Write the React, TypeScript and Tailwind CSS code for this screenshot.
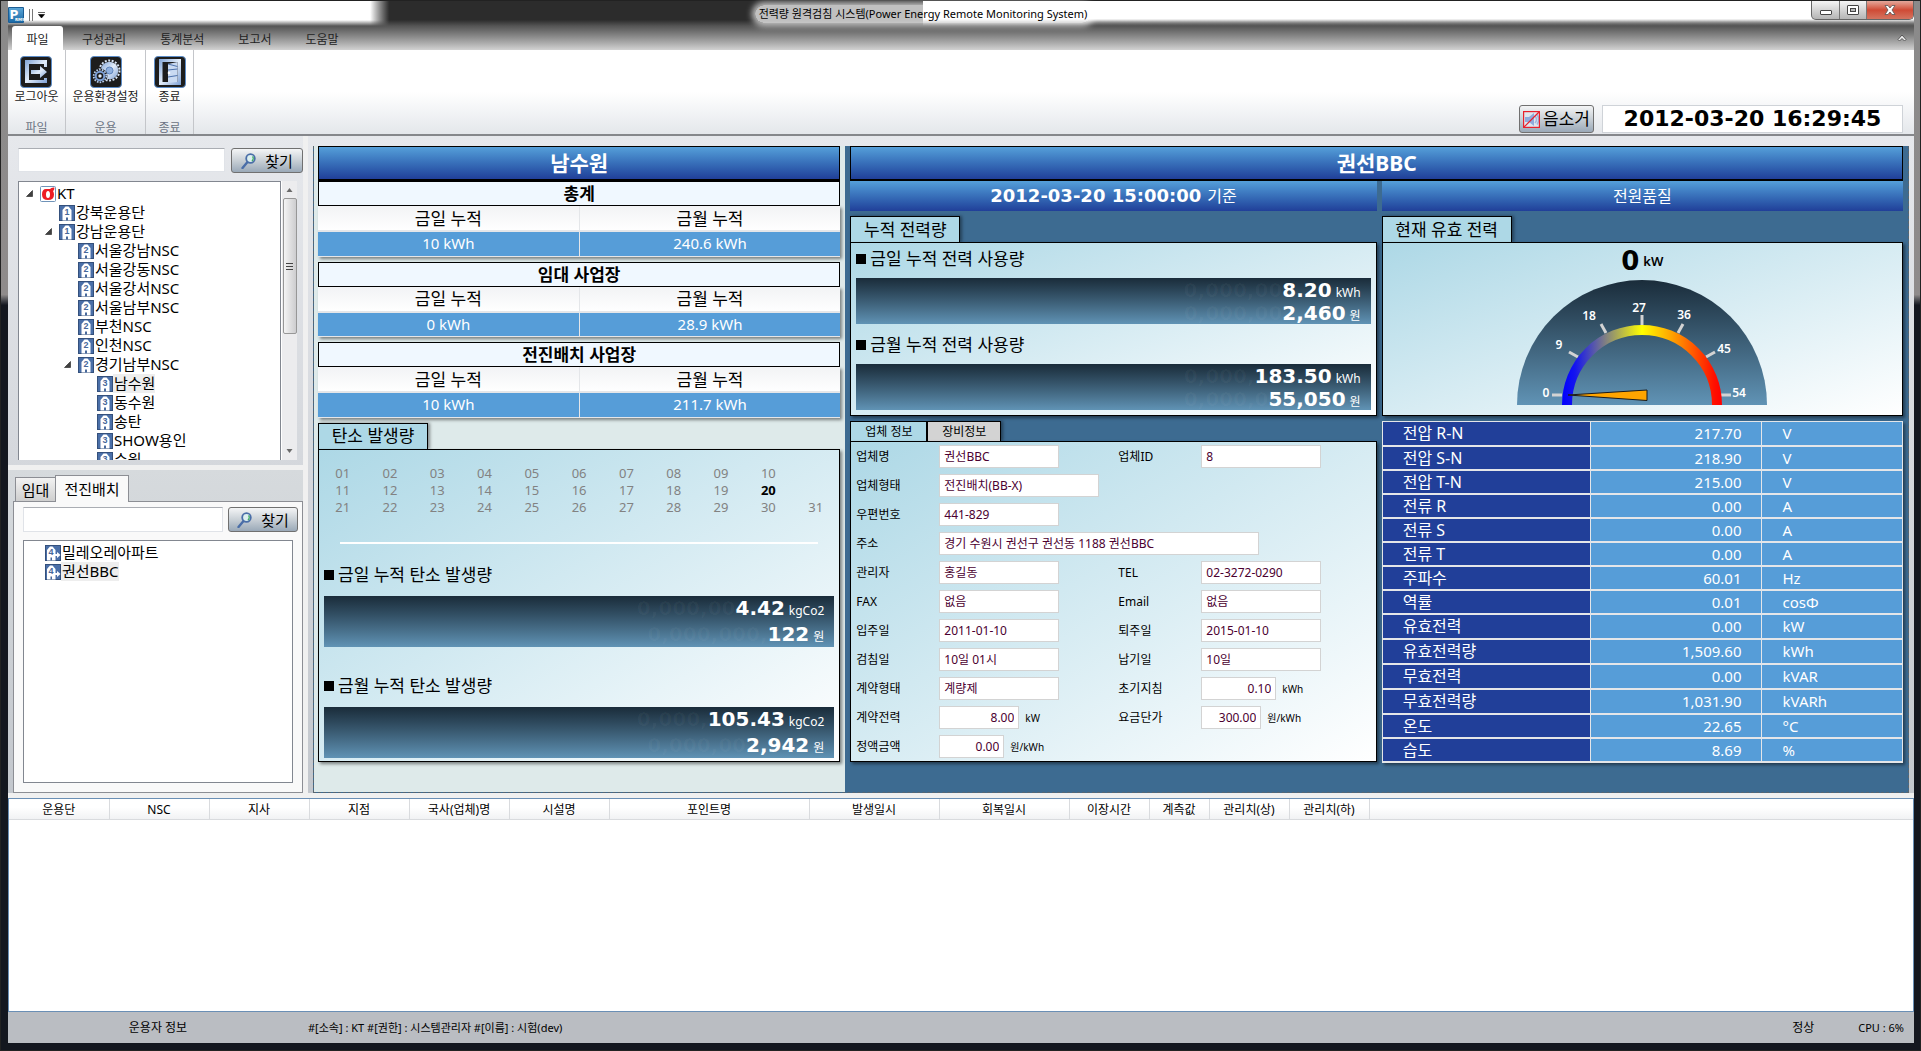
import React from "react";

/* ---------- icons ---------- */

function LogoIcon() {
  return (
    <svg width="16" height="16" viewBox="0 0 16 16" className="shrink-0" aria-hidden="true">
      <defs>
        <linearGradient id="logoBg" x1="0" y1="0" x2="0" y2="1">
          <stop offset="0" stopColor="#5aa5d6" />
          <stop offset="1" stopColor="#1c6ba8" />
        </linearGradient>
      </defs>
      <rect width="16" height="16" rx="1" fill="#1b5d94" />
      <rect x="1" y="1" width="14" height="14" fill="url(#logoBg)" />
      <text x="1.500" y="11.500" fontSize="12" fontWeight="700" fontFamily="DejaVu Sans, sans-serif" fill="#fff">
        P
      </text>
      <text x="7" y="13.500" fontSize="4" fontWeight="700" fontFamily="DejaVu Sans, sans-serif" fill="#fff">
        RMS
      </text>
    </svg>
  );
}

function IconFrame({ children }: { children: React.ReactNode }) {
  return (
    <svg width="32" height="32" viewBox="0 0 32 32" aria-hidden="true">
      <defs>
        <linearGradient id="steel" x1="0" y1="0" x2="1" y2="1">
          <stop offset="0" stopColor="#7fa3d6" />
          <stop offset="0.500" stopColor="#e3edfa" />
          <stop offset="1" stopColor="#7c9fd4" />
        </linearGradient>
      </defs>
      <rect x="0.500" y="0.500" width="31" height="31" rx="3.500" fill="#1d1d1d" stroke="#5b8cc8" />
      {children}
    </svg>
  );
}

function LogoutIcon() {
  return (
    <IconFrame>
      <path d="M27 4H5v23h22v-5h-3v2H9V8h15v3h3z" fill="url(#steel)" />
      <path d="M11 14h9v-4l7 6-7 6v-4h-9z" fill="url(#steel)" />
    </IconFrame>
  );
}

function GearsIcon() {
  return (
    <IconFrame>
      <circle cx="19.500" cy="14.500" r="10" fill="none" stroke="#dbe7f8" strokeWidth="2" strokeDasharray="2 1.500" />
      <circle cx="19.500" cy="14.500" r="8.800" fill="url(#steel)" />
      <circle cx="19.500" cy="14.500" r="3.500" fill="#8fb0de" stroke="#5e84bd" />
      <circle cx="10" cy="20" r="7.500" fill="#1d1d1d" />
      <circle cx="10" cy="20" r="6.300" fill="none" stroke="#b7cdec" strokeWidth="1.800" strokeDasharray="1.600 1.200" />
      <circle cx="10" cy="20" r="4.300" fill="none" stroke="#7b9fd6" strokeWidth="2" />
      <circle cx="10" cy="20" r="1.700" fill="#e3edfa" />
    </IconFrame>
  );
}

function DoorIcon() {
  return (
    <IconFrame>
      <path d="M5 3h22v26H5z M8.500 6v20h15V6z" fill="url(#steel)" fillRule="evenodd" />
      <path d="M14 8l9.500-2v20l-9.500 1z" fill="#c9daf2" />
      <path d="M14 8l9.500 2.500M14 14l9.500-1M14 21l9.500-1.500" stroke="#4d72ad" strokeWidth="1" fill="none" />
      <circle cx="15" cy="17" r="1.300" fill="#fff" />
    </IconFrame>
  );
}

function SearchIcon() {
  return (
    <svg width="16" height="16" viewBox="0 0 16 16" aria-hidden="true" className="shrink-0">
      <path d="M1.500 15l5-6" stroke="#4a6ea8" strokeWidth="2.400" strokeLinecap="round" />
      <circle cx="9.500" cy="5.500" r="4.300" fill="#dcefef" stroke="#4a6ea8" strokeWidth="1.800" />
      <path d="M11.500 3.500c1 1 1 3-.5 4.500" stroke="#3fae62" strokeWidth="1.400" fill="none" />
    </svg>
  );
}

function MuteIcon() {
  return (
    <svg width="17" height="17" viewBox="0 0 17 17" aria-hidden="true" className="shrink-0">
      <rect x="1" y="1" width="15" height="15" fill="#dfe6ee" />
      <path d="M2 6h4l5-4v13l-5-4H2z" fill="#8fabdc" />
      <path d="M12 5c2 2 2 5 0 7M14 3.500c2 3 2 7 0 10" stroke="#9db8e2" strokeWidth="1.500" fill="none" />
      <rect x="0.600" y="0.600" width="15.800" height="15.800" fill="none" stroke="#e8202c" strokeWidth="1.200" />
      <path d="M1 16L16 1" stroke="#e8202c" strokeWidth="1.200" />
    </svg>
  );
}

function KtIcon() {
  return (
    <svg width="16" height="16" viewBox="0 0 16 16" aria-hidden="true" className="shrink-0">
      <rect x="0.500" y="0.500" width="15" height="15" rx="1" fill="#fff" stroke="#6f93b8" />
      <path
        d="M6 3h4q1.500-2 4.500-1.500 0 2.500-1.500 3.500 1 1.500 1 3.500 0 5.500-6 5.500T2 8.500 6 3z M8 5q-2 0-2 3.500T8 12t2-3.500T8 5z"
        fill="#ed1c24"
        fillRule="evenodd"
      />
    </svg>
  );
}

function BuildingIcon({ n, arrow = false }: { n: number; arrow?: boolean }) {
  return (
    <svg width="16" height="16" viewBox="0 0 16 16" aria-hidden="true" className="shrink-0">
      <rect x="0.500" y="0.500" width="15" height="15" fill="#4a6fa8" stroke="#34507c" />
      <path d={arrow ? "M2 15.500V5l3-3.500h2.500l3 3.500v10.500z" : "M3.500 15.500V5l3-3.500h3l3 3.500v10.500z"} fill="#fff" />
      <text x={arrow ? 6 : 8} y="10" textAnchor="middle" fontSize="9" fontFamily="Liberation Sans, sans-serif" fontWeight="700" fill="#47689b">
        {n}
      </text>
      <path d={arrow ? "M5.500 15.500v-3h1.500v3" : "M7 15.500v-3h2v3"} fill="#47689b" />
      {arrow && <path d="M10 9h2V7l3.500 3-3.500 3v-2h-2z" fill="#fff" />}
    </svg>
  );
}

function Expander() {
  return (
    <svg width="7" height="7" viewBox="0 0 7 7" aria-hidden="true" className="shrink-0">
      <path d="M6.500 0.500v6h-6z" fill="#404040" stroke="#222" strokeWidth="0.600" />
    </svg>
  );
}

/* ---------- shared parts ---------- */

function FindButton({ className }: { className: string }) {
  return (
    <button
      type="button"
      className={
        "flex h-[25px] items-center justify-center gap-2 rounded-[3px] border border-[#707070] bg-linear-to-b from-[#f4f5f6] via-[#c9d0d6] to-[#9aa9b8] text-[15px] leading-5 text-black " +
        className
      }
    >
      <SearchIcon />
      찾기
    </button>
  );
}

function TitleBar({ children }: { children: React.ReactNode }) {
  return (
    <h2 className="flex h-[35px] items-center justify-center border border-b-2 border-black bg-linear-to-b from-[#559fd9] to-[#213f99] text-[21px] font-bold leading-6 text-white">
      {children}
    </h2>
  );
}

function Heading({ children }: { children: React.ReactNode }) {
  return (
    <h3 className="flex items-center gap-1 text-[17px] leading-5 text-black">
      <span className="h-[10px] w-[10px] bg-black" />
      {children}
    </h3>
  );
}

type Reading = { ghost: string; value: string; unit: string };

function Meter({ rows, className }: { rows: Reading[]; className: string }) {
  return (
    <div className={"flex flex-col justify-around bg-linear-to-b from-[#1a2c3a] to-[#6093b5] pr-[10px] " + className}>
      {rows.map((r) => (
        <div key={r.unit + r.value} className="flex items-baseline justify-end gap-1 text-white">
          <span className="font-['DejaVu_Sans',sans-serif] text-[20px] font-bold leading-[22px]">
            <span className="text-white/3" aria-hidden="true">
              {r.ghost}
            </span>
            {r.value}
          </span>
          <span className="text-[12px] leading-4">{r.unit}</span>
        </div>
      ))}
    </div>
  );
}

/* ---------- title bar and ribbon ---------- */

function WindowHeader() {
  return (
    <header>
      <div className="relative flex h-[25px] items-start justify-between bg-linear-to-r from-white from-19% via-[#2c2c2c] via-20% to-[#2c2c2c] to-48%">
        <div className="absolute inset-y-0 right-0 left-[48%] bg-linear-to-b from-white from-70% to-[#777]" />
        <div className="absolute inset-x-0 bottom-0 h-[6px] bg-linear-to-b from-transparent to-[#555]" />
        <div className="relative flex items-center gap-[5px] pt-[6px]">
          <LogoIcon />
          <span className="h-3 w-[4px] border-x border-[#777]" />
          <svg width="7" height="6" viewBox="0 0 7 6" aria-hidden="true">
            <path d="M0 0.500h7M0.500 2.500h6L3.500 6z" fill="#000" stroke="#000" strokeWidth="0.600" />
          </svg>
        </div>
        <div className="absolute inset-x-0 top-1 pr-[76px] text-center text-[11px] leading-[18px] text-black">
          <h1 className="inline-block rounded-full bg-white/70 px-1 shadow-[0_0_6px_3px_rgba(255,255,255,0.7)]">
            전력량 원격검침 시스템(Power Energy Remote Monitoring System)
          </h1>
        </div>
        <div className="relative flex h-[19px] overflow-hidden rounded-b-[5px] border border-t-0 border-[#666] bg-linear-to-b from-[#f5f5f5] to-[#b5b5b5]">
          <button type="button" aria-label="최소화" className="flex w-7 items-center justify-center border-r border-[#777]">
            <span className="mt-1 h-[5px] w-3 rounded-[1px] border border-[#444] bg-white" />
          </button>
          <button type="button" aria-label="최대화" className="flex w-[27px] items-center justify-center border-r border-[#777]">
            <span className="flex h-[10px] w-3 items-center justify-center rounded-[1px] border border-[#444] bg-white">
              <span className="h-1 w-[6px] border border-[#444] bg-[#bbb]" />
            </span>
          </button>
          <button
            type="button"
            aria-label="닫기"
            className="flex w-[46px] items-center justify-center bg-linear-to-b from-[#e3a79b] via-[#cf4a35] to-[#d4735f]"
          >
            <svg width="12" height="10" viewBox="0 0 12 10" aria-hidden="true">
              <path d="M1 0.500h3l2 2.500 2-2.500h3L8 5l3 4.500H8L6 7 4 9.500H1L4 5z" fill="#fff" stroke="#555" strokeWidth="0.800" />
            </svg>
          </button>
        </div>
      </div>
      <nav className="flex h-6 items-stretch bg-linear-to-b from-[#555] to-[#d2d2d2] pl-1 text-[12px] leading-4 text-[#222]">
        <button type="button" className="w-[51px] rounded-t-[3px] bg-white pt-[3px]">
          파일
        </button>
        <div className="flex flex-1 items-stretch gap-[34px] pt-[3px] pl-[19px]">
          <button type="button">구성관리</button>
          <button type="button">통계분석</button>
          <button type="button">보고서</button>
          <button type="button">도움말</button>
        </div>
        <button type="button" aria-label="리본 접기" className="flex w-6 items-center justify-center">
          <svg width="10" height="8" viewBox="0 0 10 8" aria-hidden="true">
            <path d="M1 5.500L5 1l4 4.500-1.500 1.500L5 4.500 2.500 7z" fill="#eee" stroke="#555" />
          </svg>
        </button>
      </nav>
    </header>
  );
}

function RibbonGroup({ icon, label, group, className }: { icon: React.ReactNode; label: string; group: string; className: string }) {
  return (
    <div className={"flex flex-col items-center justify-between border-r border-[#c4c6ca] pt-[6px] " + className}>
      <button type="button" className="flex flex-col items-center gap-px text-[12px] leading-4 whitespace-nowrap text-[#222]">
        {icon}
        {label}
      </button>
      <span className="text-[12px] leading-3 text-[#6b7483]">{group}</span>
    </div>
  );
}

function Ribbon() {
  return (
    <div className="flex h-[86px] border-b-2 border-[#85878b] bg-linear-to-b from-white from-50% to-[#e4e7eb]">
      <RibbonGroup icon={<LogoutIcon />} label="로그아웃" group="파일" className="w-[58px]" />
      <RibbonGroup icon={<GearsIcon />} label="운용환경설정" group="운용" className="w-20" />
      <RibbonGroup icon={<DoorIcon />} label="종료" group="종료" className="w-12" />
      <div className="flex flex-1 items-end justify-end gap-2 pr-[11px] pb-px">
        <button
          type="button"
          className="flex h-7 w-[75px] items-center justify-center gap-[3px] rounded-[3px] border border-[#707070] bg-linear-to-b from-[#f4f5f6] via-[#c9d0d6] to-[#9aa9b8] text-[17px] leading-5 text-black"
        >
          <MuteIcon />
          음소거
        </button>
        <time className="flex h-7 w-[301px] items-center justify-center border border-[#cfd3d8] bg-white font-['DejaVu_Sans',sans-serif] text-[22px] font-bold leading-6 text-black">
          2012-03-20 16:29:45
        </time>
      </div>
    </div>
  );
}

/* ---------- sidebar ---------- */

const INDENT = ["pl-[7px]", "pl-[26px]", "pl-[45px]", "pl-[64px]"];

const TREE: { label: string; level: number; open?: boolean; selected?: boolean }[] = [
  { label: "KT", level: 0, open: true },
  { label: "강북운용단", level: 1 },
  { label: "강남운용단", level: 1, open: true },
  { label: "서울강남NSC", level: 2 },
  { label: "서울강동NSC", level: 2 },
  { label: "서울강서NSC", level: 2 },
  { label: "서울남부NSC", level: 2 },
  { label: "부천NSC", level: 2 },
  { label: "인천NSC", level: 2 },
  { label: "경기남부NSC", level: 2, open: true },
  { label: "남수원", level: 3, selected: true },
  { label: "동수원", level: 3 },
  { label: "송탄", level: 3 },
  { label: "SHOW용인", level: 3 },
  { label: "수원", level: 3 },
];

function Sidebar() {
  return (
    <aside className="flex w-[295px] shrink-0 flex-col">
      <section className="flex h-[329px] flex-col pt-3 pl-[10px]">
        <div className="flex gap-[6px]">
          <input aria-label="운용단 검색" className="h-6 min-w-0 flex-1 border border-[#e0e3e8] border-t-[#aaadb3] bg-white px-1 text-[15px]" />
          <FindButton className="w-[72px]" />
        </div>
        <div className="mt-2 flex h-[279px]">
          <ul className="w-[263px] overflow-hidden border border-b-0 border-[#828790] bg-white pt-[2px] text-[15px] leading-[19px] text-black">
            {TREE.map((t) => (
              <li key={t.label} className={"flex h-[19px] items-center " + INDENT[t.level]}>
                <span className="w-[14px] shrink-0">{t.open && <Expander />}</span>
                {t.level === 0 ? <KtIcon /> : <BuildingIcon n={t.level} />}
                <span className={t.selected ? "bg-[#eee] pl-px whitespace-nowrap" : "pl-px whitespace-nowrap"}>{t.label}</span>
              </li>
            ))}
          </ul>
          <div className="flex w-4 flex-col items-center justify-between border-l border-white bg-[#ececee]">
            <svg width="7" height="17" viewBox="0 0 7 17" aria-hidden="true">
              <path d="M3.500 7l3 4h-6z" fill="#6a6a6a" />
            </svg>
            <div className="mb-auto flex h-[136px] w-[14px] flex-col items-center justify-center gap-[2px] rounded-[2px] border border-[#979797] bg-linear-to-r from-[#f4f4f4] to-[#cdcdcf]">
              <span className="h-px w-[7px] bg-[#444]" />
              <span className="h-px w-[7px] bg-[#444]" />
              <span className="h-px w-[7px] bg-[#444]" />
            </div>
            <svg width="7" height="17" viewBox="0 0 7 17" aria-hidden="true">
              <path d="M3.500 10l3-4h-6z" fill="#6a6a6a" />
            </svg>
          </div>
        </div>
      </section>
      <div className="h-[5px] bg-[#f0f0f0]" />
      <section className="flex flex-1 flex-col bg-linear-to-b from-[#d6dadd] to-[#c3c7cd] pt-[5px] pl-[5px]">
        <div className="flex items-end pl-[2px] text-[15px] leading-5 text-black">
          <button type="button" className="h-6 w-10 border border-r-0 border-b-0 border-[#8c8e94] bg-linear-to-b from-[#f2f2f2] to-[#cfcfcf]">
            임대
          </button>
          <button type="button" className="relative -mb-px h-[27px] w-[74px] border border-b-0 border-[#8c8e94] bg-[#f9f9f9]">
            전진배치
          </button>
        </div>
        <div className="flex flex-1 flex-col border border-[#8c8e94] bg-[#f9f9f9] pt-[5px] pr-1 pb-[9px] pl-[9px]">
          <div className="flex gap-[5px]">
            <input aria-label="사업장 검색" className="h-[25px] min-w-0 flex-1 border border-[#e0e3e8] border-t-[#aaadb3] bg-white px-1 text-[15px]" />
            <FindButton className="w-[70px]" />
          </div>
          <ul className="mt-2 mr-[5px] flex-1 border border-[#828790] bg-white pt-[2px] pl-[21px] text-[15px] leading-[19px] text-black">
            <li className="flex h-[19px] items-center">
              <BuildingIcon n={4} arrow />
              <span className="pl-px">밀레오레아파트</span>
            </li>
            <li className="flex h-[19px] items-center">
              <BuildingIcon n={4} arrow />
              <span className="bg-[#eee] pl-px">권선BBC</span>
            </li>
          </ul>
        </div>
      </section>
    </aside>
  );
}

/* ---------- branch summary ---------- */

const TOTALS = [
  { title: "총계", today: "10 kWh", month: "240.6 kWh" },
  { title: "임대 사업장", today: "0 kWh", month: "28.9 kWh" },
  { title: "전진배치 사업장", today: "10 kWh", month: "211.7 kWh" },
];

const DAYS = [
  ["01", "02", "03", "04", "05", "06", "07", "08", "09", "10", ""],
  ["11", "12", "13", "14", "15", "16", "17", "18", "19", "20", ""],
  ["21", "22", "23", "24", "25", "26", "27", "28", "29", "30", "31"],
];

function BranchPanel() {
  return (
    <section className="min-w-0 bg-[#deeaea] pr-[5px] pl-1">
      <TitleBar>남수원</TitleBar>
      <div className="flex flex-col gap-[5px]">
        {TOTALS.map((t) => (
          <table key={t.title} className="w-full table-fixed border-collapse text-center shadow-[2px_2px_3px_rgba(0,0,0,0.45)]">
            <caption className="h-[25px] border border-black bg-[#f0f8ff] text-[17px] font-bold leading-[23px] text-black">{t.title}</caption>
            <thead>
              <tr className="h-[25px] bg-linear-to-b from-[#f2f3f5] to-white text-[17px] leading-[23px] text-black">
                <th className="border-r border-b-2 border-[#e4e6e9] p-0 font-normal">금일 누적</th>
                <th className="border-b-2 border-[#e4e6e9] p-0 font-normal">금월 누적</th>
              </tr>
            </thead>
            <tbody>
              <tr className="h-[25px] bg-[#569dd8] text-[15px] leading-[23px] text-white">
                <td className="border-r border-b border-[#e4e6e9] p-0">{t.today}</td>
                <td className="border-b border-[#e4e6e9] p-0">{t.month}</td>
              </tr>
            </tbody>
          </table>
        ))}
      </div>
      <div className="pt-[5px]">
        <h3 className="flex h-[26px] w-[110px] items-center justify-center border border-b-0 border-black bg-[#add8e6] text-[17px] leading-5 text-black shadow-[2px_0_3px_rgba(0,0,0,0.4)]">
          탄소 발생량
        </h3>
        <div className="relative flex h-[313px] flex-col border border-black bg-linear-to-br from-[#add8e6] to-white px-[5px] shadow-[2px_2px_3px_rgba(0,0,0,0.45)]">
          <div className="-mx-[5px] mt-[15px]">
            <table className="w-full table-fixed text-center text-[13px] leading-[17px] text-[#828282]">
              <tbody>
                {DAYS.map((w) => (
                  <tr key={w[0]}>
                    {w.map((d, i) => (
                      <td key={i} className={d === "20" ? "p-0 font-bold text-black" : "p-0"}>
                        {d}
                      </td>
                    ))}
                  </tr>
                ))}
              </tbody>
            </table>
          </div>
          <hr className="mx-4 mt-[26px] border-t-2 border-white" />
          <div className="mt-[21px]">
            <Heading>금일 누적 탄소 발생량</Heading>
            <Meter
              className="mt-[11px] h-[51px]"
              rows={[
                { ghost: "0,000,00", value: "4.42", unit: "kgCo2" },
                { ghost: "0,000,000,", value: "122", unit: "원" },
              ]}
            />
          </div>
          <div className="mt-[29px]">
            <Heading>금월 누적 탄소 발생량</Heading>
            <Meter
              className="mt-[11px] h-[51px]"
              rows={[
                { ghost: "0,000,", value: "105.43", unit: "kgCo2" },
                { ghost: "0,000,00", value: "2,942", unit: "원" },
              ]}
            />
          </div>
        </div>
      </div>
    </section>
  );
}

/* ---------- site details ---------- */

type Field = { id: string; label: string; value: string; width: string; unit?: string };

const FIELDS: [Field, Field?][] = [
  [
    { id: "name", label: "업체명", value: "권선BBC", width: "w-[120px]" },
    { id: "cid", label: "업체ID", value: "8", width: "w-[120px]" },
  ],
  [{ id: "kind", label: "업체형태", value: "전진배치(BB-X)", width: "w-[160px]" }],
  [{ id: "zip", label: "우편번호", value: "441-829", width: "w-[120px]" }],
  [{ id: "addr", label: "주소", value: "경기 수원시 권선구 권선동 1188 권선BBC", width: "w-[320px]" }],
  [
    { id: "mgr", label: "관리자", value: "홍길동", width: "w-[120px]" },
    { id: "tel", label: "TEL", value: "02-3272-0290", width: "w-[120px]" },
  ],
  [
    { id: "fax", label: "FAX", value: "없음", width: "w-[120px]" },
    { id: "email", label: "Email", value: "없음", width: "w-[120px]" },
  ],
  [
    { id: "in", label: "입주일", value: "2011-01-10", width: "w-[120px]" },
    { id: "out", label: "퇴주일", value: "2015-01-10", width: "w-[120px]" },
  ],
  [
    { id: "read", label: "검침일", value: "10일 01시", width: "w-[120px]" },
    { id: "due", label: "납기일", value: "10일", width: "w-[120px]" },
  ],
  [
    { id: "ctype", label: "계약형태", value: "계량제", width: "w-[120px]" },
    { id: "init", label: "초기지침", value: "0.10", width: "w-[75px]", unit: "kWh" },
  ],
  [
    { id: "cpow", label: "계약전력", value: "8.00", width: "w-[80px]", unit: "kW" },
    { id: "price", label: "요금단가", value: "300.00", width: "w-[60px]", unit: "원/kWh" },
  ],
  [{ id: "flat", label: "정액금액", value: "0.00", width: "w-[65px]", unit: "원/kWh" }],
];

function FieldRow({ f }: { f: Field }) {
  return (
    <div className="flex items-center">
      <label htmlFor={f.id} className="w-[83px] shrink-0 text-[12px] leading-4 text-black">
        {f.label}
      </label>
      <input
        id={f.id}
        defaultValue={f.value}
        className={
          "h-[23px] border border-[#d3d3d3] bg-white px-1 pb-px text-[12px] leading-4 text-[#4b0030] " + f.width + (f.unit ? " text-right" : "")
        }
      />
      {f.unit && <span className="pl-[6px] text-[10px] leading-4 text-black">{f.unit}</span>}
    </div>
  );
}

const TICKS: { n: number; x: number; y: number; tick: string }[] = [
  { n: 0, x: 29, y: 117, tick: "M35 115h10" },
  { n: 9, x: 42, y: 69, tick: "M52 72l9 5" },
  { n: 18, x: 72, y: 40, tick: "M84 44l5 9" },
  { n: 27, x: 122, y: 32, tick: "M125 35v10" },
  { n: 36, x: 167, y: 39, tick: "M166 44l-5 9" },
  { n: 45, x: 207, y: 73, tick: "M198 72l-9 5" },
  { n: 54, x: 222, y: 117, tick: "M204 115h10" },
];

function Gauge() {
  return (
    <svg width="250" height="125" viewBox="0 0 250 125" role="img" aria-label="현재 유효 전력 0 kW">
      <defs>
        <linearGradient id="dial" x1="0" y1="0" x2="0" y2="1">
          <stop offset="0" stopColor="#1a2c3a" />
          <stop offset="1" stopColor="#6093b5" />
        </linearGradient>
        <linearGradient id="band" x1="45" y1="0" x2="205" y2="0" gradientUnits="userSpaceOnUse">
          <stop offset="0" stopColor="#0000ff" />
          <stop offset="0.080" stopColor="#1414f0" />
          <stop offset="0.500" stopColor="#ffff00" />
          <stop offset="0.690" stopColor="#ffa000" />
          <stop offset="0.950" stopColor="#ff1000" />
          <stop offset="1" stopColor="#ff0000" />
        </linearGradient>
      </defs>
      <path d="M0 125a125 125 0 0 1 250 0z" fill="url(#dial)" />
      {TICKS.map((t) => (
        <path key={t.n} d={t.tick} stroke="#d3d3d3" strokeWidth="3" />
      ))}
      <path d="M50 125a75 75 0 0 1 150 0" fill="none" stroke="url(#band)" strokeWidth="10" />
      <path d="M51 115l79-5v10.500z" fill="#ffa500" stroke="#1a1a1a" strokeWidth="1" />
      <g fill="#fff" fontSize="12" fontWeight="600" textAnchor="middle" fontFamily="Noto Sans, sans-serif">
        {TICKS.map((t) => (
          <text key={t.n} x={t.x} y={t.y}>
            {t.n}
          </text>
        ))}
      </g>
    </svg>
  );
}

const QUALITY: [string, string, string][] = [
  ["전압 R-N", "217.70", "V"],
  ["전압 S-N", "218.90", "V"],
  ["전압 T-N", "215.00", "V"],
  ["전류 R", "0.00", "A"],
  ["전류 S", "0.00", "A"],
  ["전류 T", "0.00", "A"],
  ["주파수", "60.01", "Hz"],
  ["역률", "0.01", "cosΦ"],
  ["유효전력", "0.00", "kW"],
  ["유효전력량", "1,509.60", "kWh"],
  ["무효전력", "0.00", "kVAR"],
  ["무효전력량", "1,031.90", "kVARh"],
  ["온도", "22.65", "°C"],
  ["습도", "8.69", "%"],
];

function SitePanel() {
  return (
    <section className="min-w-0 bg-[#3d6b91] px-[5px] pb-[29px]">
      <TitleBar>권선BBC</TitleBar>
      <div className="grid grid-cols-[527fr_522fr] gap-[5px]">
        <div className="min-w-0">
          <div className="flex h-[30px] items-center justify-center gap-[6px] bg-linear-to-b from-[#559fd9] to-[#213f99] text-[16px] leading-5 text-white">
            <time className="font-['DejaVu_Sans',sans-serif] text-[18px] font-bold">2012-03-20 15:00:00</time>
            기준
          </div>
          <h3 className="mt-[5px] flex h-[26px] w-[110px] items-center justify-center border border-b-0 border-black bg-[#add8e6] text-[17px] leading-5 text-black shadow-[2px_0_3px_rgba(0,0,0,0.4)]">
            누적 전력량
          </h3>
          <div className="relative flex h-[174px] flex-col border border-black bg-linear-to-br from-[#add8e6] to-white px-[5px] pt-[6px] shadow-[2px_2px_3px_rgba(0,0,0,0.45)]">
            <Heading>금일 누적 전력 사용량</Heading>
            <Meter
              className="mt-[9px] h-[46px]"
              rows={[
                { ghost: "0,000,00", value: "8.20", unit: "kWh" },
                { ghost: "0,000,00", value: "2,460", unit: "원" },
              ]}
            />
            <div className="mt-[11px]">
              <Heading>금월 누적 전력 사용량</Heading>
            </div>
            <Meter
              className="mt-[9px] h-[46px]"
              rows={[
                { ghost: "0,000,", value: "183.50", unit: "kWh" },
                { ghost: "0,000,0", value: "55,050", unit: "원" },
              ]}
            />
          </div>
          <div className="mt-[5px] flex h-5 text-[12px] leading-4 text-black">
            <button type="button" className="w-[77px] border border-b-0 border-black bg-[#add8e6]">
              업체 정보
            </button>
            <button type="button" className="w-[74px] border border-b-0 border-black bg-[#d3d3d3] shadow-[2px_0_3px_rgba(0,0,0,0.4)]">
              장비정보
            </button>
          </div>
          <form className="relative flex flex-col gap-[6px] border border-black bg-linear-to-br from-[#add8e6] to-white px-[5px] py-[3px] shadow-[2px_2px_3px_rgba(0,0,0,0.45)]">
            {FIELDS.map(([a, b]) => (
              <div key={a.id} className={b ? "grid grid-cols-[262px_1fr]" : "grid"}>
                <FieldRow f={a} />
                {b && <FieldRow f={b} />}
              </div>
            ))}
          </form>
        </div>
        <div className="min-w-0">
          <div className="flex h-[30px] items-center justify-center bg-linear-to-b from-[#559fd9] to-[#213f99] text-[16px] leading-5 text-white">
            전원품질
          </div>
          <h3 className="mt-[5px] flex h-[26px] w-[130px] items-center justify-center border border-b-0 border-black bg-[#add8e6] text-[17px] leading-5 text-black shadow-[2px_0_3px_rgba(0,0,0,0.4)]">
            현재 유효 전력
          </h3>
          <div className="relative flex h-[174px] flex-col items-center justify-between border border-black bg-linear-to-br from-[#add8e6] to-white pt-[4px] pb-[10px] shadow-[2px_2px_3px_rgba(0,0,0,0.45)]">
            <div className="flex items-center gap-1 text-black">
              <span className="font-['DejaVu_Sans',sans-serif] text-[26px] font-bold leading-7">0</span>
              <span className="text-[13px] font-semibold leading-4">kW</span>
            </div>
            <Gauge />
          </div>
          <table className="mt-[5px] w-full table-fixed border-collapse border border-[#e4e6e9] text-[15px] leading-[22px] text-white shadow-[2px_2px_3px_rgba(0,0,0,0.45)]">
            <colgroup>
              <col className="w-[40%]" />
              <col className="w-[33%]" />
              <col className="w-[27%]" />
            </colgroup>
            <tbody>
              {QUALITY.map(([k, v, u], i) => (
                <tr key={k} className={i > 7 && i < 12 ? "h-[25px]" : "h-[24px]"}>
                  <th className="border-r border-b-2 border-[#e4e6e9] bg-[#213f99] p-0 pl-5 text-left text-[16px] font-normal">{k}</th>
                  <td className="border-r border-b-2 border-[#e4e6e9] bg-[#569dd8] p-0 pr-5 text-right">{v}</td>
                  <td className="border-b-2 border-[#e4e6e9] bg-[#569dd8] p-0 pl-5">{u}</td>
                </tr>
              ))}
            </tbody>
          </table>
        </div>
      </div>
    </section>
  );
}

/* ---------- event list and status bar ---------- */

const COLUMNS: [string, string][] = [
  ["운용단", "w-[100px]"],
  ["NSC", "w-[100px]"],
  ["지사", "w-[100px]"],
  ["지점", "w-[100px]"],
  ["국사(업체)명", "w-[100px]"],
  ["시설명", "w-[100px]"],
  ["포인트명", "w-[200px]"],
  ["발생일시", "w-[130px]"],
  ["회복일시", "w-[130px]"],
  ["이장시간", "w-[80px]"],
  ["계측값", "w-[60px]"],
  ["관리치(상)", "w-[80px]"],
  ["관리치(하)", "w-[80px]"],
];

function EventList() {
  return (
    <div className="min-h-[214px] flex-1 border border-[#6a8fb5] bg-white">
      <table className="w-full table-fixed border-collapse text-[12px] leading-4 text-black">
        <thead>
          <tr className="h-[21px] bg-linear-to-b from-white from-40% to-[#f0f1f3]">
            {COLUMNS.map(([name, w]) => (
              <th key={name} className={"border-r border-b border-[#d9dbde] p-0 pt-[3px] font-normal whitespace-nowrap " + w}>
                {name}
              </th>
            ))}
            <th className="border-b border-[#d9dbde] p-0" />
          </tr>
        </thead>
      </table>
    </div>
  );
}

export default function App() {
  return (
    <div className="flex min-h-screen flex-col border border-[#222] bg-linear-to-b from-[#8a8a8a] via-[#8f8b8b] via-28% to-[#14171f] to-29% pr-[6px] pb-[7px] pl-[7px] font-['Noto_Sans','Noto_Sans_CJK_KR',sans-serif]">
      <WindowHeader />
      <Ribbon />
      <main className="flex bg-linear-to-b from-[#e6e8ec] to-[#c3c7cd] pr-[5px]">
        <Sidebar />
        <div className="mr-[5px] w-[5px] shrink-0 bg-[#f0f0f0]" />
        <div className="mt-[10px] grid min-w-0 flex-1 grid-cols-[1fr_2fr] border border-t-0 border-dashed border-[#5a6670] bg-[#3d6b91]">
          <BranchPanel />
          <SitePanel />
        </div>
      </main>
      <div className="h-[5px] bg-[#f0f0f0]" />
      <EventList />
      <footer className="flex h-[31px] items-center bg-[#babdc2] text-[12px] leading-4 text-black">
        <span className="w-[300px] text-center">운용자 정보</span>
        <span className="flex-1 text-[11px]">#[소속] : KT #[권한] : 시스템관리자 #[이름] : 시험(dev)</span>
        <span className="w-[66px]">정상</span>
        <span className="pr-[10px] text-[11px]">CPU : 6%</span>
      </footer>
    </div>
  );
}
